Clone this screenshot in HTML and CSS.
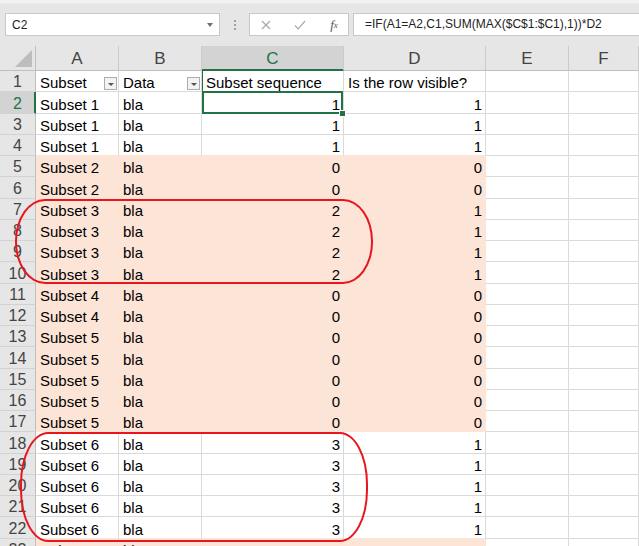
FILE: index.html
```html
<!DOCTYPE html>
<html>
<head>
<meta charset="utf-8">
<link rel="stylesheet" href="styles.css">
</head>
<body>
<div class="app">
  <div class="topbar">
    <div class="namebox"><span>C2</span><span class="caret"></span></div>
    <div class="grip"><i></i><i></i><i></i></div>
    <div class="fbtns">
      <span class="fb"><svg width="10" height="10" viewBox="0 0 10 10"><path d="M1 1L9 9M9 1L1 9" stroke="#a8a8a8" stroke-width="1.2" fill="none"/></svg></span>
      <span class="fb"><svg width="12" height="10" viewBox="0 0 12 10"><path d="M1 5.5L4.2 8.8L11 1" stroke="#a8a8a8" stroke-width="1.2" fill="none"/></svg></span>
      <span class="fb fx">f<sub>x</sub></span>
    </div>
    <div class="formula">=IF(A1=A2,C1,SUM(MAX($C$1:$C1),1))*D2</div>
  </div>
  <div class="sheet">
    <div class="row hdr">
      <div class="corner"><svg width="17" height="17" viewBox="0 0 17 17"><polygon points="17,0 17,17 0,17" fill="#bdbdbd"/></svg></div>
      <div class="ch">A</div><div class="ch">B</div><div class="ch sel">C</div><div class="ch">D</div><div class="ch">E</div><div class="ch">F</div>
    </div>
    <div class="row">
      <div class="rh">1</div><div class="c v">Subset<span class="filt"></span></div><div class="c v">Data<span class="filt"></span></div><div class="c v c1">Subset sequence</div><div class="c v">Is the row visible?</div><div class="c"></div><div class="c"></div>
    </div>
    <div class="row">
      <div class="rh sel">2</div><div class="c v">Subset 1</div><div class="c v">bla</div><div class="c v n cur">1</div><div class="c v n">1</div><div class="c"></div><div class="c"></div>
    </div>
    <div class="row">
      <div class="rh">3</div><div class="c v">Subset 1</div><div class="c v">bla</div><div class="c v n">1</div><div class="c v n">1</div><div class="c"></div><div class="c"></div>
    </div>
    <div class="row pb">
      <div class="rh">4</div><div class="c v">Subset 1</div><div class="c v">bla</div><div class="c v n">1</div><div class="c v n">1</div><div class="c"></div><div class="c"></div>
    </div>
    <div class="row pk">
      <div class="rh">5</div><div class="c v">Subset 2</div><div class="c v">bla</div><div class="c v n">0</div><div class="c v n">0</div><div class="c"></div><div class="c"></div>
    </div>
    <div class="row pk">
      <div class="rh">6</div><div class="c v">Subset 2</div><div class="c v">bla</div><div class="c v n">0</div><div class="c v n">0</div><div class="c"></div><div class="c"></div>
    </div>
    <div class="row pk">
      <div class="rh">7</div><div class="c v">Subset 3</div><div class="c v">bla</div><div class="c v n">2</div><div class="c v n">1</div><div class="c"></div><div class="c"></div>
    </div>
    <div class="row pk">
      <div class="rh">8</div><div class="c v">Subset 3</div><div class="c v">bla</div><div class="c v n">2</div><div class="c v n">1</div><div class="c"></div><div class="c"></div>
    </div>
    <div class="row pk">
      <div class="rh">9</div><div class="c v">Subset 3</div><div class="c v">bla</div><div class="c v n">2</div><div class="c v n">1</div><div class="c"></div><div class="c"></div>
    </div>
    <div class="row pk">
      <div class="rh">10</div><div class="c v">Subset 3</div><div class="c v">bla</div><div class="c v n">2</div><div class="c v n">1</div><div class="c"></div><div class="c"></div>
    </div>
    <div class="row pk">
      <div class="rh">11</div><div class="c v">Subset 4</div><div class="c v">bla</div><div class="c v n">0</div><div class="c v n">0</div><div class="c"></div><div class="c"></div>
    </div>
    <div class="row pk">
      <div class="rh">12</div><div class="c v">Subset 4</div><div class="c v">bla</div><div class="c v n">0</div><div class="c v n">0</div><div class="c"></div><div class="c"></div>
    </div>
    <div class="row pk">
      <div class="rh">13</div><div class="c v">Subset 5</div><div class="c v">bla</div><div class="c v n">0</div><div class="c v n">0</div><div class="c"></div><div class="c"></div>
    </div>
    <div class="row pk">
      <div class="rh">14</div><div class="c v">Subset 5</div><div class="c v">bla</div><div class="c v n">0</div><div class="c v n">0</div><div class="c"></div><div class="c"></div>
    </div>
    <div class="row pk">
      <div class="rh">15</div><div class="c v">Subset 5</div><div class="c v">bla</div><div class="c v n">0</div><div class="c v n">0</div><div class="c"></div><div class="c"></div>
    </div>
    <div class="row pk">
      <div class="rh">16</div><div class="c v">Subset 5</div><div class="c v">bla</div><div class="c v n">0</div><div class="c v n">0</div><div class="c"></div><div class="c"></div>
    </div>
    <div class="row pk">
      <div class="rh">17</div><div class="c v">Subset 5</div><div class="c v">bla</div><div class="c v n">0</div><div class="c v n">0</div><div class="c"></div><div class="c"></div>
    </div>
    <div class="row">
      <div class="rh">18</div><div class="c v">Subset 6</div><div class="c v">bla</div><div class="c v n">3</div><div class="c v n">1</div><div class="c"></div><div class="c"></div>
    </div>
    <div class="row">
      <div class="rh">19</div><div class="c v">Subset 6</div><div class="c v">bla</div><div class="c v n">3</div><div class="c v n">1</div><div class="c"></div><div class="c"></div>
    </div>
    <div class="row">
      <div class="rh">20</div><div class="c v">Subset 6</div><div class="c v">bla</div><div class="c v n">3</div><div class="c v n">1</div><div class="c"></div><div class="c"></div>
    </div>
    <div class="row">
      <div class="rh">21</div><div class="c v">Subset 6</div><div class="c v">bla</div><div class="c v n">3</div><div class="c v n">1</div><div class="c"></div><div class="c"></div>
    </div>
    <div class="row pb">
      <div class="rh">22</div><div class="c v">Subset 6</div><div class="c v">bla</div><div class="c v n">3</div><div class="c v n">1</div><div class="c"></div><div class="c"></div>
    </div>
    <div class="row pk">
      <div class="rh">23</div><div class="c v">Subset 7</div><div class="c v">bla</div><div class="c v n">4</div><div class="c v n">1</div><div class="c"></div><div class="c"></div>
    </div>
  </div>
  <div class="ring ring1"></div>
  <div class="ring ring2"></div>
</div>
</body>
</html>
```

FILE: styles.css
```css
html, body {
  margin: 0;
  padding: 0;
  background: #ffffff;
}
.app {
  position: relative;
  width: 639px;
  height: 546px;
  overflow: hidden;
  font-family: "Liberation Sans", Arial, sans-serif;
  color: #000;
}
.topbar {
  height: 46px;
  box-sizing: border-box;
  padding: 13px 0 0 5px;
  display: flex;
  align-items: flex-start;
  background: linear-gradient(#f2f2f2 0, #f2f2f2 3px, #e6e6e6 4px, #e6e6e6 100%);
}
.namebox {
  width: 215px;
  height: 23px;
  box-sizing: border-box;
  background: #fff;
  border: 1px solid #c8c8c8;
  display: flex;
  align-items: center;
  justify-content: space-between;
  padding: 0 6px;
  font-size: 12px;
  color: #222;
}
.caret {
  width: 0;
  height: 0;
  border-left: 3.5px solid transparent;
  border-right: 3.5px solid transparent;
  border-top: 4px solid #707070;
}
.grip {
  width: 29px;
  height: 23px;
  display: flex;
  flex-direction: column;
  align-items: center;
  justify-content: center;
  gap: 2px;
}
.grip i {
  display: block;
  width: 2px;
  height: 2px;
  background: #a0a0a0;
}
.fbtns {
  width: 100px;
  height: 23px;
  box-sizing: border-box;
  background: #fff;
  border: 1px solid #c8c8c8;
  display: flex;
  align-items: center;
  padding-left: 6px;
  gap: 14px;
}
.fb {
  width: 20px;
  height: 21px;
  display: flex;
  align-items: center;
  justify-content: center;
}
.fx {
  font-family: "Liberation Serif", "Times New Roman", serif;
  font-style: italic;
  font-size: 13px;
  color: #555;
}
.fx sub {
  font-size: 9px;
  vertical-align: -1px;
}
.formula {
  flex: 1;
  margin-left: 4px;
  height: 23px;
  box-sizing: border-box;
  background: #fff;
  border: 1px solid #c8c8c8;
  border-right: none;
  padding-left: 11px;
  font-size: 12px;
  line-height: 21px;
  color: #222;
  white-space: nowrap;
}
.sheet {
  display: flex;
  flex-direction: column;
}
.row {
  display: grid;
  grid-template-columns: 36px 83px 83px 142px 142px 83px 70px;
  height: 21.25px;
  flex: none;
}
.row.hdr {
  height: 25px;
}
.corner {
  box-sizing: border-box;
  background: #e6e6e6;
  border-right: 1px solid #bfbfbf;
  border-bottom: 1px solid #bfbfbf;
  display: flex;
  justify-content: flex-end;
  align-items: flex-end;
  padding: 0 3px 3px 0;
}
.ch {
  box-sizing: border-box;
  background: #e6e6e6;
  border-right: 1px solid #cbcbcb;
  border-bottom: 1px solid #bfbfbf;
  display: flex;
  justify-content: center;
  align-items: flex-end;
  font-size: 17px;
  line-height: 20px;
  padding-bottom: 1px;
  color: #444;
}
.ch.sel {
  background: #d3d3d3;
  color: #217346;
  border-bottom-color: #217346;
  box-shadow: inset 0 -1px 0 #217346;
}
.rh {
  box-sizing: border-box;
  background: #e6e6e6;
  border-right: 1px solid #bfbfbf;
  border-bottom: 1px solid #d2d2d2;
  display: flex;
  justify-content: center;
  align-items: flex-end;
  font-size: 16px;
  line-height: 18px;
  color: #444;
}
.rh.sel {
  background: #d3d3d3;
  color: #217346;
  border-right-color: #217346;
  box-shadow: inset -1px 0 0 #217346;
}
.c {
  box-sizing: border-box;
  border-right: 1px solid #dadada;
  border-bottom: 1px solid #dadada;
  padding: 0 4px;
  display: flex;
  align-items: flex-end;
  font-size: 15px;
  line-height: 17px;
  white-space: nowrap;
  overflow: hidden;
}
.c.n {
  justify-content: flex-end;
  padding-right: 3px;
}
.pk .v {
  background: #fce4d6;
  border-color: #fce4d6;
}
.pb .v {
  border-bottom-color: #fce4d6;
}
.c1 {
  box-shadow: inset 1px 0 0 #217346;
}
.filt {
  width: 13px;
  height: 13px;
  box-sizing: border-box;
  margin-left: auto;
  margin-right: -3px;
  margin-bottom: 1px;
  background: #f3f3f3;
  border: 1px solid #adadad;
  display: flex;
  align-items: center;
  justify-content: center;
  flex: none;
}
.filt::after {
  content: "";
  width: 0;
  height: 0;
  border-left: 3px solid transparent;
  border-right: 3px solid transparent;
  border-top: 3px solid #555;
  margin-top: 1px;
}
.cur {
  position: relative;
  overflow: visible;
}
.cur::before {
  content: "";
  position: absolute;
  top: -1px;
  left: 0;
  right: 0;
  bottom: -1px;
  border: 2px solid #217346;
}
.cur::after {
  content: "";
  position: absolute;
  right: -2px;
  bottom: -3px;
  width: 5px;
  height: 5px;
  background: #217346;
  box-shadow: 0 0 0 1px #fff;
}
.ring {
  position: absolute;
  box-sizing: border-box;
  border: 2px solid #e8161c;
}
.ring1 {
  left: 15px;
  top: 199px;
  width: 358px;
  height: 85px;
  border-radius: 30px / 42px;
}
.ring2 {
  left: 20px;
  top: 432px;
  width: 348px;
  height: 110px;
  border-radius: 28px / 52px;
}
```
